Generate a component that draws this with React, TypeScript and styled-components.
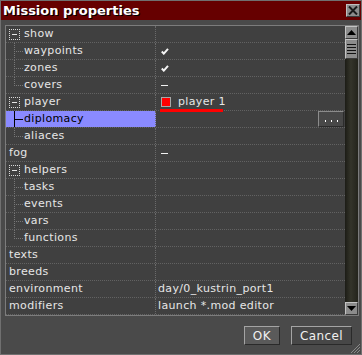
import React from 'react';
import styled, { createGlobalStyle } from 'styled-components';

const GlobalStyle = createGlobalStyle`
    html, body {
        margin: 0;
        padding: 0;
        background: #4a4a4a;
    }
    * {
        box-sizing: border-box;
    }
`;

const FONT = `"DejaVu Sans", Verdana, sans-serif`;

const Window = styled.div`
    position: relative;
    width: 362px;
    height: 355px;
    display: flex;
    flex-direction: column;
    background: #4a4a4a;
    border: 1px solid #707070;
    font-family: ${FONT};
    font-size: 11px;
    color: #e6e6e6;
`;

const TitleBar = styled.div`
    display: flex;
    align-items: center;
    justify-content: space-between;
    height: 19px;
    padding: 0 1px 0 2px;
    background: #660000;
`;

const Title = styled.span`
    font-weight: bold;
    font-size: 13px;
    color: #ffffff;
    text-shadow: 1px 1px 0 #000;
`;

const CloseButton = styled.div`
    display: flex;
    align-items: center;
    justify-content: center;
    width: 14px;
    height: 13px;
    background: #8c8c8c;
    border: 1px solid;
    border-color: #c0c0c0 #3a3a3a #3a3a3a #c0c0c0;
`;

const Body = styled.div`
    flex: 1;
    display: flex;
    flex-direction: column;
    padding: 5px 2px 0 4px;
`;

const Panel = styled.div`
    display: flex;
    width: 354px;
    border: 1px solid #7c7c7c;
    background: #404040;
`;

const Table = styled.div`
    flex: 1;
    display: flex;
    flex-direction: column;
`;

const Row = styled.div`
    display: grid;
    grid-template-columns: 150px 1fr;
    height: 17px;
    border-bottom: 1px dotted #626262;
`;

interface NameCellProps {
    $selected?: boolean;
}

const NameCell = styled.div<NameCellProps>`
    display: flex;
    align-items: center;
    padding-left: 3px;
    border-right: 1px dotted #6a6a6a;
    background: ${({ $selected }) => ($selected ? '#8a8aff' : 'transparent')};
    color: ${({ $selected }) => ($selected ? '#000' : 'inherit')};
    white-space: nowrap;
`;

const ValueCell = styled.div`
    position: relative;
    display: flex;
    align-items: center;
    padding-left: 2px;
    white-space: nowrap;
`;

const Label = styled.span`
    letter-spacing: 0.35px;
    line-height: 16px;
`;

const Expander = styled.span`
    display: inline-flex;
    align-items: center;
    justify-content: center;
    width: 11px;
    height: 11px;
    margin-right: 4px;
    border: 1px dotted #d8d8d8;

    &::after {
        content: '';
        width: 5px;
        height: 1px;
        background: #e6e6e6;
    }
`;

const Gutter = styled.svg`
    flex: none;
    width: 15px;
    height: 16px;
`;

const Mark = styled.span`
    display: inline-flex;
    margin-left: 3px;
`;

const Dash = styled.span`
    width: 7px;
    height: 1px;
    margin-left: 3px;
    background: #f0f0f0;
`;

const Swatch = styled.span`
    width: 10px;
    height: 10px;
    margin: 0 7px 0 3px;
    background: #ff0000;
    border: 1px solid #a8a8a8;
`;

const Underline = styled.span`
    position: absolute;
    left: 4px;
    bottom: -2px;
    width: 63px;
    height: 3px;
    background: #ff0000;
    z-index: 1;
`;

const DotsButton = styled.div`
    position: absolute;
    right: 1px;
    top: 0;
    display: flex;
    align-items: flex-end;
    justify-content: center;
    gap: 3px;
    width: 26px;
    height: 16px;
    padding-bottom: 4px;
    background: #484848;
    border: 1px solid;
    border-color: #8c8c8c #2c2c2c #2c2c2c #8c8c8c;

    span {
        width: 1px;
        height: 2px;
        background: #fff;
        margin: 0 1px;
    }
`;

const Scrollbar = styled.div`
    display: flex;
    flex-direction: column;
    width: 13px;
`;

const ArrowButton = styled.div`
    display: flex;
    align-items: center;
    justify-content: center;
    height: 13px;
    background: #8c8c8c;
    border: 1px solid;
    border-color: #c4c4c4 #3a3a3a #3a3a3a #c4c4c4;
`;

const Thumb = styled.div`
    display: flex;
    flex-direction: column;
    justify-content: center;
    gap: 2px;
    height: 20px;
    padding: 0 1px;
    background: #8c8c8c;
    border: 1px solid;
    border-color: #c4c4c4 #3a3a3a #3a3a3a #c4c4c4;

    span {
        height: 1px;
        background: #111;
    }
`;

const Track = styled.div`
    flex: 1;
    background: linear-gradient(to right, #1c1c16, #34342a 45%, #24241c);
`;

const Footer = styled.div`
    display: flex;
    justify-content: flex-end;
    gap: 11px;
    padding: 10px 7px 0 0;
`;

interface ButtonProps {
    $default?: boolean;
}

const Button = styled.div<ButtonProps>`
    display: flex;
    align-items: center;
    justify-content: center;
    height: 19px;
    padding: 0 8px;
    min-width: 35px;
    background: ${({ $default }) => ($default ? '#5a5a5a' : '#474747')};
    border: 1px solid;
    border-color: #a4a4a4 #2a2a2a #2a2a2a #a4a4a4;
    color: #f0f0f0;
    letter-spacing: 0.4px;
    font-size: 12px;
`;

const Grip = styled.svg`
    position: absolute;
    right: 0;
    bottom: 0;
`;

const Check = () => (
    <Mark>
        <svg width="8" height="7" viewBox="0 0 8 7">
            <polyline points="0.8,3.5 2.8,5.6 7,0.8" fill="none" stroke="#f4f4f4" strokeWidth="2" />
        </svg>
    </Mark>
);

// tree connector for a child row; last child ends in an L
const Branch = ({ last, dark }: { last?: boolean; dark?: boolean }) => {
    const color = dark ? '#000' : '#777';
    const dash = dark ? undefined : '1 1';
    return (
        <Gutter viewBox="0 0 15 16">
            <line x1="5.5" y1="0" x2="5.5" y2={last ? 8 : 16} stroke={color} strokeDasharray={dash} />
            <line x1="5" y1="8.5" x2="14" y2="8.5" stroke={color} strokeDasharray={dash} />
        </Gutter>
    );
};

type Item = {
    name: string;
    kind: 'parent' | 'child' | 'leaf';
    last?: boolean;
    value?: React.ReactNode;
    selected?: boolean;
};

const items: Item[] = [
    { name: 'show', kind: 'parent' },
    { name: 'waypoints', kind: 'child', value: <Check /> },
    { name: 'zones', kind: 'child', value: <Check /> },
    { name: 'covers', kind: 'child', last: true, value: <Dash /> },
    {
        name: 'player',
        kind: 'parent',
        value: (
            <>
                <Swatch />
                <Label>player 1</Label>
                <Underline />
            </>
        ),
    },
    {
        name: 'diplomacy',
        kind: 'child',
        selected: true,
        value: (
            <DotsButton>
                <span />
                <span />
                <span />
            </DotsButton>
        ),
    },
    { name: 'aliaces', kind: 'child', last: true },
    { name: 'fog', kind: 'leaf', value: <Dash /> },
    { name: 'helpers', kind: 'parent' },
    { name: 'tasks', kind: 'child' },
    { name: 'events', kind: 'child' },
    { name: 'vars', kind: 'child' },
    { name: 'functions', kind: 'child', last: true },
    { name: 'texts', kind: 'leaf' },
    { name: 'breeds', kind: 'leaf' },
    { name: 'environment', kind: 'leaf', value: <Label>day/0_kustrin_port1</Label> },
    { name: 'modifiers', kind: 'leaf', value: <Label>launch *.mod editor</Label> },
];

const App = () => (
    <>
        <GlobalStyle />
        <Window>
            <TitleBar>
                <Title>Mission properties</Title>
                <CloseButton>
                    <svg width="10" height="9" viewBox="0 0 10 9">
                        <path d="M1 0.5 L9 8.5 M9 0.5 L1 8.5" stroke="#1a1a1a" strokeWidth="2" />
                    </svg>
                </CloseButton>
            </TitleBar>
            <Body>
                <Panel>
                    <Table>
                        {items.map(item => (
                            <Row key={item.name}>
                                <NameCell $selected={item.selected}>
                                    {item.kind === 'parent' && <Expander />}
                                    {item.kind === 'child' && <Branch last={item.last} dark={item.selected} />}
                                    <Label>{item.name}</Label>
                                </NameCell>
                                <ValueCell>{item.value}</ValueCell>
                            </Row>
                        ))}
                    </Table>
                    <Scrollbar>
                        <ArrowButton>
                            <svg width="9" height="5" viewBox="0 0 9 5">
                                <polygon points="0,5 9,5 4.5,0" fill="#000" />
                            </svg>
                        </ArrowButton>
                        <Thumb>
                            <span />
                            <span />
                            <span />
                            <span />
                        </Thumb>
                        <Track />
                        <ArrowButton>
                            <svg width="9" height="5" viewBox="0 0 9 5">
                                <polygon points="0,0 9,0 4.5,5" fill="#000" />
                            </svg>
                        </ArrowButton>
                    </Scrollbar>
                </Panel>
                <Footer>
                    <Button $default>OK</Button>
                    <Button>Cancel</Button>
                </Footer>
            </Body>
            <Grip width="11" height="11" viewBox="0 0 11 11">
                <path d="M10 1 L1 10 M10 4 L4 10 M10 7 L7 10" stroke="#8a8a8a" strokeWidth="1" />
            </Grip>
        </Window>
    </>
);

export default App;
